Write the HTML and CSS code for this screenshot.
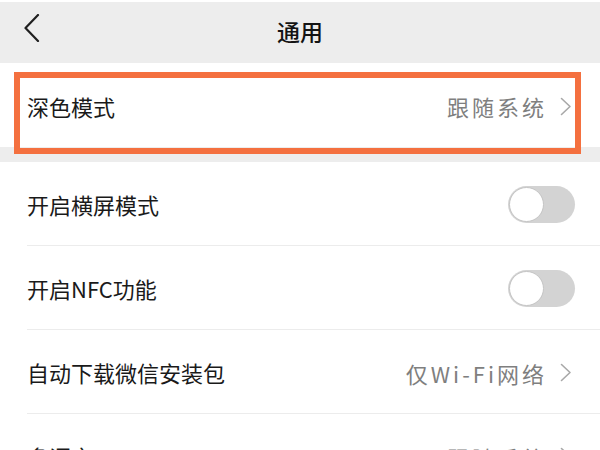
FILE: index.html
```html
<!DOCTYPE html>
<html lang="zh-CN">
<head>
<meta charset="utf-8">
<title>通用</title>
<link rel="stylesheet" href="styles.css">
</head>
<body>
<div class="page">
  <header class="nav">
    <span class="back">
      <svg width="16" height="28" viewBox="0 0 16 28"><polyline points="14,1 1.5,14 14,27" fill="none" stroke="#1f1f1f" stroke-width="2.2" stroke-linecap="round" stroke-linejoin="round"/></svg>
    </span>
    <h1 class="title">通用</h1>
  </header>

  <section class="group">
    <div class="row">
      <div class="row-inner no-line">
        <span class="label">深色模式</span>
        <span class="value">跟随系统</span>
        <svg class="chev" width="12" height="19" viewBox="0 0 12 19"><polyline points="1.5,1.5 10,9.5 1.5,17.5" fill="none" stroke="#a8a8a8" stroke-width="1.6" stroke-linecap="round" stroke-linejoin="round"/></svg>
      </div>
    </div>
  </section>

  <div class="gap"></div>

  <section class="group">
    <div class="row">
      <div class="row-inner">
        <span class="label">开启横屏模式</span>
        <span class="toggle"><span class="knob"></span></span>
      </div>
    </div>
    <div class="row">
      <div class="row-inner">
        <span class="label">开启NFC功能</span>
        <span class="toggle"><span class="knob"></span></span>
      </div>
    </div>
    <div class="row">
      <div class="row-inner">
        <span class="label">自动下载微信安装包</span>
        <span class="value">仅Wi-Fi网络</span>
        <svg class="chev" width="12" height="19" viewBox="0 0 12 19"><polyline points="1.5,1.5 10,9.5 1.5,17.5" fill="none" stroke="#a8a8a8" stroke-width="1.6" stroke-linecap="round" stroke-linejoin="round"/></svg>
      </div>
    </div>
    <div class="row">
      <div class="row-inner">
        <span class="label">多语言</span>
        <span class="value">跟随系统</span>
        <svg class="chev" width="12" height="19" viewBox="0 0 12 19"><polyline points="1.5,1.5 10,9.5 1.5,17.5" fill="none" stroke="#a8a8a8" stroke-width="1.6" stroke-linecap="round" stroke-linejoin="round"/></svg>
      </div>
    </div>
  </section>

  <div class="highlight"></div>
</div>
</body>
</html>
```

FILE: styles.css
```css
* { box-sizing: border-box; }
html, body {
  margin: 0;
  padding: 0;
  background: #ffffff;
}
body {
  font-family: "Noto Sans CJK SC", "Noto Sans", sans-serif;
  color: #1a1a1a;
  width: 600px;
  height: 450px;
  overflow: hidden;
}
.page {
  position: relative;
  width: 600px;
  padding-top: 2px;
}
.nav {
  height: 61px;
  background: #ededed;
  display: flex;
  align-items: center;
  justify-content: center;
  position: relative;
}
.back {
  position: absolute;
  left: 24px;
  top: 12px;
  display: flex;
}
.title {
  margin: 0;
  margin-top: -4px;
  font-size: 23px;
  font-weight: 500;
  line-height: 30px;
  color: #141414;
}
.group {
  background: #ffffff;
}
.gap {
  height: 15px;
  background: #ededed;
}
.row {
  padding-left: 27px;
}
.row-inner {
  height: 84px;
  display: flex;
  align-items: center;
  padding-right: 28px;
  border-bottom: 1px solid #ececec;
}
.row-inner.no-line {
  border-bottom: none;
}
.label {
  font-size: 22px;
  line-height: 30px;
  flex: 1;
  margin-top: 1px;
}
.value {
  font-size: 22px;
  line-height: 30px;
  color: #7f7f7f;
  letter-spacing: 3px;
  margin-right: 13px;
  margin-top: 2px;
}
.chev {
  display: block;
  margin-top: 2px;
}
.toggle {
  width: 67px;
  height: 37px;
  border-radius: 19px;
  background: #d3d3d3;
  position: relative;
  margin-top: 2px;
  margin-right: -3px;
}
.knob {
  position: absolute;
  left: 1px;
  top: 1px;
  width: 35px;
  height: 35px;
  border-radius: 50%;
  background: #ffffff;
  border: 1.5px solid #c4c4c4;
}
.highlight {
  position: absolute;
  left: 14px;
  top: 72px;
  width: 567px;
  height: 82px;
  border: 6px solid #f4703f;
  pointer-events: none;
}
```
